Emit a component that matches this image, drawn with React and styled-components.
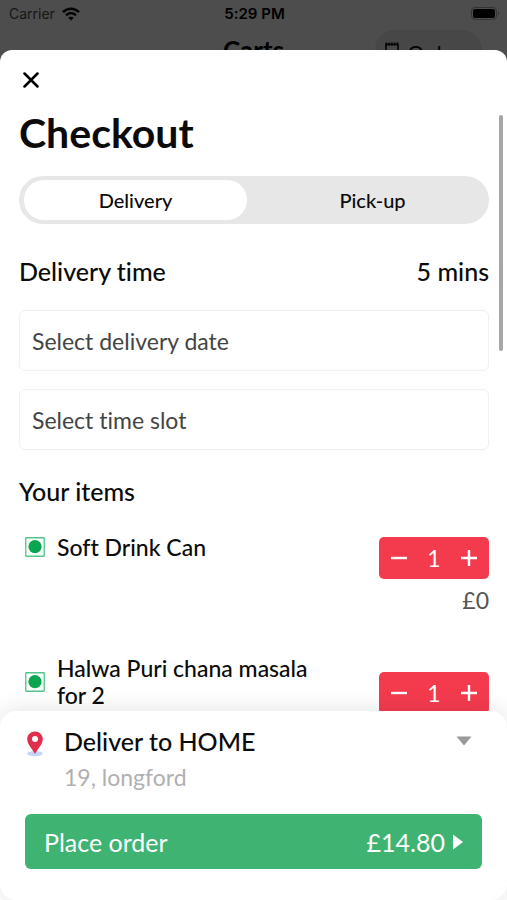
import React, { useState } from 'react';
import styled, { createGlobalStyle } from 'styled-components';

const Colors = {
  backdrop: '#4d4d4d',
  pill: '#474747',
  track: '#e7e7e7',
  border: '#f0f0f0',
  red: '#f43b4e',
  green: '#3eb372',
  veg: '#0aa64f',
  text: '#0b0b0b',
  muted: '#444444',
  faint: '#b0b0b0',
};

const GlobalStyle = createGlobalStyle`
  *, *::before, *::after {
    box-sizing: border-box;
  }

  body {
    margin: 0;
    background: ${Colors.backdrop};
    color: ${Colors.text};
    font-family: Lato, 'Noto Sans', sans-serif;
    font-variant-ligatures: none;
  }

  button, select {
    margin: 0;
    padding: 0;
    border: 0;
    background: none;
    color: inherit;
    font: inherit;
    font-variant-ligatures: none;
    cursor: pointer;
  }
`;

const Screen = styled.div`
  display: flex;
  flex-direction: column;
  height: 100vh;
  min-height: 480px;
`;

const Behind = styled.div`
  flex: none;
  height: 50px;
  overflow: hidden;
`;

const StatusBar = styled.div`
  display: grid;
  grid-template-columns: 1fr auto 1fr;
  align-items: center;
  height: 28px;
  padding: 0 7px 0 9px;
  color: #000;
  font-family: Inter, sans-serif;
  font-size: 14px;
  line-height: 20px;
`;

const Carrier = styled.span`
  display: flex;
  align-items: center;
  gap: 7px;
  color: #161616;
`;

const Clock = styled.span`
  font-size: 15px;
  font-weight: 600;
`;

const BatteryIcon = styled.svg`
  justify-self: end;
`;

const CartBar = styled.div`
  display: grid;
  grid-template-columns: 1fr auto 1fr;
  align-items: start;
  padding: 2px 25px 0;
  color: #000;
`;

const CartTitle = styled.span`
  grid-column: 2;
  padding-top: 4px;
  font-size: 26px;
  line-height: 32px;
  font-weight: 700;
`;

const OrdersPill = styled.span`
  display: flex;
  justify-self: end;
  gap: 8px;
  height: 40px;
  padding: 10px 14px 0 9px;
  border-radius: 20px;
  background: ${Colors.pill};
  font-size: 20px;
  line-height: 24px;
`;

const Sheet = styled.main`
  position: relative;
  display: flex;
  flex: 1;
  flex-direction: column;
  min-height: 0;
  border-radius: 12px 12px 0 0;
  background: #fff;
  overflow: hidden;
`;

const CloseButton = styled.button`
  display: flex;
  flex: none;
  align-items: center;
  justify-content: center;
  width: 32px;
  height: 32px;
  margin: 14px 0 0 15px;
`;

const ScrollArea = styled.div`
  flex: 1;
  min-height: 0;
  padding: 12px 18px 0 19px;
  overflow-y: auto;
  scrollbar-width: none;
`;

const ScrollThumb = styled.div`
  position: absolute;
  top: 65px;
  right: 4px;
  width: 4px;
  height: 236px;
  border-radius: 2px;
  background: #a6a6a6;
`;

const Title = styled.h1`
  margin: 0 0 18px;
  font-size: 41px;
  line-height: 50px;
  font-weight: 700;
`;

const Toggle = styled.div`
  display: flex;
  gap: 14px;
  height: 48px;
  padding: 4px 5px;
  border-radius: 24px;
  background: ${Colors.track};
`;

const ToggleOption = styled.button`
  flex: 1;
  border-radius: 20px;
  background: ${({ $active }) => ($active ? '#fff' : 'transparent')};
  font-size: 20px;
  line-height: 24px;
  font-weight: 500;
`;

const SectionRow = styled.div`
  display: flex;
  justify-content: space-between;
  margin: ${({ $margin }) => $margin};
  font-size: 25px;
  line-height: 32px;
  font-weight: 500;
`;

const SectionTitle = styled.h2`
  margin: 0;
  font: inherit;
`;

const Field = styled.select`
  display: block;
  width: 100%;
  height: 61px;
  margin-bottom: 18px;
  padding: 0 12px;
  border: 1px solid ${Colors.border};
  border-radius: 6px;
  background: #fff;
  color: ${Colors.muted};
  font-size: 23px;
  line-height: 32px;
  appearance: none;
`;

const ItemList = styled.ul`
  margin: 0;
  padding: 0;
  list-style: none;
`;

const Item = styled.li`
  display: flex;
  align-items: flex-start;
  justify-content: space-between;
  height: 135px;
`;

const ItemLead = styled.div`
  display: flex;
  align-items: center;
  gap: 12px;
  height: 20px;
  padding-left: 6px;
`;

const VegIcon = styled.svg`
  flex: none;
`;

const ItemName = styled.span`
  max-width: 280px;
  font-size: 23px;
  line-height: 27px;
  font-weight: 500;
`;

const ItemSide = styled.div`
  flex: none;
  text-align: right;
`;

const Stepper = styled.div`
  display: flex;
  align-items: center;
  width: 110px;
  height: 42px;
  border-radius: 5px;
  background: ${Colors.red};
  color: #fff;
  font-size: 23px;
  line-height: 42px;
`;

const StepButton = styled.button`
  display: flex;
  align-items: center;
  justify-content: center;
  width: 40px;
  height: 42px;
`;

const Quantity = styled.span`
  flex: 1;
  text-align: center;
`;

const ItemPrice = styled.div`
  margin-top: 5px;
  color: #555;
  font-size: 23px;
  line-height: 32px;
`;

const Footer = styled.footer`
  position: relative;
  flex: none;
  padding: 14px 25px 31px;
  border-radius: 16px;
  background: #fff;
  box-shadow: 0 0 24px rgba(0, 0, 0, 0.12);
`;

const AddressButton = styled.button`
  display: grid;
  grid-template-columns: 20px 1fr auto;
  column-gap: 19px;
  width: 100%;
  padding-right: 10px;
  text-align: left;
`;

const AddressTitle = styled.span`
  font-size: 25px;
  line-height: 32px;
  font-weight: 500;
`;

const AddressLine = styled.span`
  grid-column: 2;
  margin-top: 4px;
  color: ${Colors.faint};
  font-size: 23px;
  line-height: 32px;
`;

const PinIcon = styled.svg`
  margin-top: 6px;
`;

const CaretIcon = styled.svg`
  margin-top: 11px;
`;

const OrderButton = styled.button`
  display: flex;
  align-items: center;
  justify-content: space-between;
  width: 100%;
  height: 55px;
  margin-top: 21px;
  padding: 0 19px;
  border-radius: 6px;
  background: ${Colors.green};
  color: #fff;
  font-size: 25px;
  line-height: 32px;
`;

const Total = styled.span`
  display: flex;
  align-items: center;
  gap: 8px;
`;

const items = [
  { id: 1, name: 'Soft Drink Can', price: '£0' },
  { id: 2, name: 'Halwa Puri chana masala for 2', price: '£14.80' },
];

function StatusIcons() {
  return (
    <BatteryIcon width="29" height="14" viewBox="0 0 29 14" aria-hidden="true">
      <rect x="0.5" y="0.5" width="25" height="12" rx="3.5" fill="none" stroke="#333" />
      <rect x="2" y="2" width="22" height="9" rx="2" fill="#000" />
      <path d="M27 4.5c1.4.6 1.4 3.4 0 4z" fill="#333" />
    </BatteryIcon>
  );
}

function CartItem({ name, price }) {
  const [count, setCount] = useState(1);

  return (
    <Item>
      <ItemLead>
        <VegIcon width="20" height="20" viewBox="0 0 20 20" aria-hidden="true">
          <rect x="0.75" y="0.75" width="18.5" height="18.5" rx="0.5" fill="#f7fffa" stroke="#55c48a" strokeWidth="1.3" />
          <circle cx="10" cy="9.7" r="6.6" fill={Colors.veg} />
        </VegIcon>
        <ItemName>{name}</ItemName>
      </ItemLead>
      <ItemSide>
        <Stepper>
          <StepButton aria-label={`Remove one ${name}`} onClick={() => setCount(Math.max(0, count - 1))}>
            <svg width="18" height="18" viewBox="0 0 18 18" aria-hidden="true">
              <path d="M1 9h16" stroke="#fff" strokeWidth="2.4" />
            </svg>
          </StepButton>
          <Quantity>{count}</Quantity>
          <StepButton aria-label={`Add one ${name}`} onClick={() => setCount(count + 1)}>
            <svg width="18" height="18" viewBox="0 0 18 18" aria-hidden="true">
              <path d="M1 9h16M9 1v16" stroke="#fff" strokeWidth="2.4" />
            </svg>
          </StepButton>
        </Stepper>
        <ItemPrice>{price}</ItemPrice>
      </ItemSide>
    </Item>
  );
}

function App() {
  const [mode, setMode] = useState('Delivery');

  return (
    <>
      <GlobalStyle />
      <Screen>
        <Behind>
          <StatusBar>
            <Carrier>
              Carrier
              <svg width="18" height="14" viewBox="0 0 18 14" fill="none" stroke="#000" aria-hidden="true">
                <path d="M1 5.2c4.6-4.6 11.4-4.6 16 0" strokeWidth="2.5" />
                <path d="M4 8.4c3-2.9 7-2.9 10 0" strokeWidth="2.3" />
                <path d="M9 13.6l-2.7-2.9c1.5-1.3 3.9-1.3 5.4 0z" fill="#000" stroke="none" />
              </svg>
            </Carrier>
            <Clock>5:29 PM</Clock>
            <StatusIcons />
          </StatusBar>
          <CartBar>
            <CartTitle>Carts</CartTitle>
            <OrdersPill>
              <svg width="16" height="20" viewBox="0 0 16 20" fill="none" stroke="#000" aria-hidden="true">
                <path d="M2 4.500h12v14h-12z" strokeWidth="1.5" />
                <path d="M1.500 4h13" strokeWidth="3" strokeDasharray="1.6 1.2" />
              </svg>
              Orders
            </OrdersPill>
          </CartBar>
        </Behind>
        <Sheet>
          <CloseButton aria-label="Close">
            <svg width="16" height="16" viewBox="0 0 16 16" aria-hidden="true">
              <path d="M1.5 1.5l13 13M14.5 1.5l-13 13" stroke="#000" strokeWidth="2.5" strokeLinecap="round" />
            </svg>
          </CloseButton>
          <ScrollArea>
            <Title>Checkout</Title>
            <Toggle>
              {['Delivery', 'Pick-up'].map(option => (
                <ToggleOption
                  key={option}
                  $active={mode === option}
                  aria-pressed={mode === option}
                  onClick={() => setMode(option)}
                >
                  {option}
                </ToggleOption>
              ))}
            </Toggle>
            <SectionRow $margin="31px 0 23px">
              <SectionTitle>Delivery time</SectionTitle>
              <span>5 mins</span>
            </SectionRow>
            <Field aria-label="Delivery date">
              <option>Select delivery date</option>
            </Field>
            <Field aria-label="Time slot">
              <option>Select time slot</option>
            </Field>
            <SectionRow $margin="25px 0 30px">
              <SectionTitle>Your items</SectionTitle>
            </SectionRow>
            <ItemList>
              {items.map(item => (
                <CartItem key={item.id} name={item.name} price={item.price} />
              ))}
            </ItemList>
          </ScrollArea>
          <ScrollThumb />
          <Footer>
            <AddressButton>
              <PinIcon width="20" height="26" viewBox="0 0 20 26" aria-hidden="true">
                <ellipse cx="10" cy="22.7" rx="7.8" ry="2.6" fill="#c3d6f5" />
                <path
                  d="M10 0.5c-4.400 0-7.800 3.300-7.800 7.600 0 5.400 5.400 10.300 7.800 14.900 2.400-4.600 7.800-9.500 7.800-14.900 0-4.300-3.400-7.600-7.800-7.600z"
                  fill="#e0304e"
                />
                <circle cx="10" cy="8" r="3" fill="#fff" />
              </PinIcon>
              <AddressTitle>Deliver to HOME</AddressTitle>
              <CaretIcon width="16" height="10" viewBox="0 0 16 10" aria-hidden="true">
                <path d="M0.5 0.5h15l-7.5 9z" fill="#999" />
              </CaretIcon>
              <AddressLine>19, longford</AddressLine>
            </AddressButton>
            <OrderButton>
              <span>Place order</span>
              <Total>
                £14.80
                <svg width="10" height="16" viewBox="0 0 10 16" aria-hidden="true">
                  <path d="M0 0.5v15l10-7.5z" fill="#fff" />
                </svg>
              </Total>
            </OrderButton>
          </Footer>
        </Sheet>
      </Screen>
    </>
  );
}

export default App;
